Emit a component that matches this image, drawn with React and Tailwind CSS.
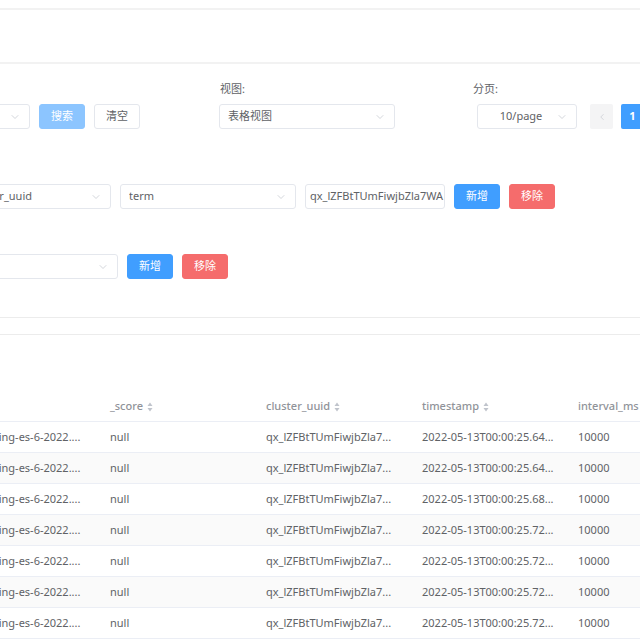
import React from "react";
import { ChevronDown, ChevronLeft } from "lucide-react";

const font = { fontFamily: '"Noto Sans", "Noto Sans CJK SC", sans-serif' };

const Select = ({ value, className = "", center = false }) => (
  <div
    className={`h-[25px] flex items-center border border-[#e4e7ed] rounded-[3px] bg-white pl-2 pr-2 text-[11px] text-[#606266] ${className}`}
  >
    <span className={`flex-1 truncate ${center ? "text-center" : ""}`}>{value}</span>
    <ChevronDown size={12} strokeWidth={1.4} color="#c0c4cc" />
  </div>
);

const Btn = ({ children, color }) => {
  const styles = {
    light: "bg-[#8cc5ff] text-white border-[#8cc5ff]",
    blue: "bg-[#409eff] text-white border-[#409eff]",
    red: "bg-[#f56c6c] text-white border-[#f56c6c]",
    plain: "bg-white text-[#606266] border-[#e4e7ed]",
  };
  return (
    <button
      className={`h-[25px] w-[46px] rounded-[3px] border text-[11px] flex items-center justify-center ${styles[color]}`}
    >
      {children}
    </button>
  );
};

const SortIcon = () => (
  <svg width="6" height="10" viewBox="0 0 6 10" className="ml-1 inline-block">
    <path d="M3 0.5 L5.5 4 H0.5 Z" fill="#c0c4cc" />
    <path d="M3 9.5 L5.5 6 H0.5 Z" fill="#c0c4cc" />
  </svg>
);

const rows = [
  "2022-05-13T00:00:25.64...",
  "2022-05-13T00:00:25.64...",
  "2022-05-13T00:00:25.68...",
  "2022-05-13T00:00:25.72...",
  "2022-05-13T00:00:25.72...",
  "2022-05-13T00:00:25.72...",
  "2022-05-13T00:00:25.72...",
];

const cols = ["_index", "_score", "cluster_uuid", "timestamp", "interval_ms"];

export default function App() {
  return (
    <div className="w-[640px] h-[640px] overflow-hidden bg-white" style={font}>
      {/* top bars */}
      <div className="h-[8px]" />
      <div className="h-[2px] bg-[#f2f2f2]" />
      <div className="h-[52px]" />
      <div className="h-[2px] bg-[#f2f2f2]" />

      {/* filter row */}
      <div className="flex items-end mt-[18px] -ml-[110px]">
        <div className="flex items-center gap-[9px]">
          <Select value="" className="w-[140px]" />
          <Btn color="light">搜索</Btn>
          <Btn color="plain">清空</Btn>
        </div>
        <div className="flex flex-col ml-[79px]">
          <span className="text-[11px] text-[#606266] mb-[8px] leading-[14px] ml-[1px]">视图:</span>
          <Select value="表格视图" className="w-[176px]" />
        </div>
        <div className="flex flex-col ml-[78px]">
          <span className="text-[11px] text-[#606266] mb-[8px] leading-[14px]">分页:</span>
          <div className="flex items-center ml-[4px]">
            <Select value="10/page" center className="w-[100px]" />
            <div className="ml-[13px] w-[23px] h-[25px] rounded-[2px] bg-[#f4f4f5] flex items-center justify-center">
              <ChevronLeft size={10} strokeWidth={1.5} color="#c0c4cc" />
            </div>
            <div className="ml-[8px] w-[23px] h-[25px] rounded-[2px] bg-[#409eff] text-white text-[11px] font-bold flex items-center justify-center">
              1
            </div>
          </div>
        </div>
      </div>

      {/* condition row 1 */}
      <div className="flex items-center gap-[9px] mt-[55px] -ml-[40px]">
        <Select value="cluster_uuid" className="w-[151px]" />
        <Select value="term" className="w-[176px]" />
        <div className="w-[140px] h-[25px] border border-[#e4e7ed] rounded-[3px] flex items-center pl-[4px] text-[11px] text-[#606266] overflow-hidden whitespace-nowrap">
          qx_lZFBtTUmFiwjbZla7WA
        </div>
        <Btn color="blue">新增</Btn>
        <Btn color="red">移除</Btn>
      </div>

      {/* condition row 2 */}
      <div className="flex items-center gap-[9px] mt-[45px] -ml-[60px]">
        <Select value="" className="w-[178px]" />
        <Btn color="blue">新增</Btn>
        <Btn color="red">移除</Btn>
      </div>

      {/* tabs lines */}
      <div className="mt-[38px] h-[1px] bg-[#ececec]" />
      <div className="h-[16px]" />
      <div className="h-[1px] bg-[#ececec]" />

      {/* table */}
      <div className="mt-[57px] -ml-[56px]">
        <div className="flex h-[30px] items-center border-b border-[#ebeef5] text-[11px] text-[#909399] font-medium">
          {cols.map((c) => (
            <div key={c} className="w-[156px] shrink-0 px-[10px] flex items-center whitespace-nowrap">
              {c}
              {c !== "interval_ms" && <SortIcon />}
            </div>
          ))}
        </div>
        {rows.map((ts, i) => (
          <div
            key={i}
            className={`flex h-[31px] items-center border-b border-[#ebeef5] text-[11px] text-[#606266] ${
              i % 2 === 1 ? "bg-[#fafafa]" : "bg-white"
            }`}
          >
            <div className="w-[156px] shrink-0 px-[10px] truncate">.monitoring-es-6-2022....</div>
            <div className="w-[156px] shrink-0 px-[10px]">null</div>
            <div className="w-[156px] shrink-0 px-[10px] truncate">qx_lZFBtTUmFiwjbZla7...</div>
            <div className="w-[156px] shrink-0 px-[10px] truncate">{ts}</div>
            <div className="w-[156px] shrink-0 px-[10px]">10000</div>
          </div>
        ))}
      </div>
    </div>
  );
}
